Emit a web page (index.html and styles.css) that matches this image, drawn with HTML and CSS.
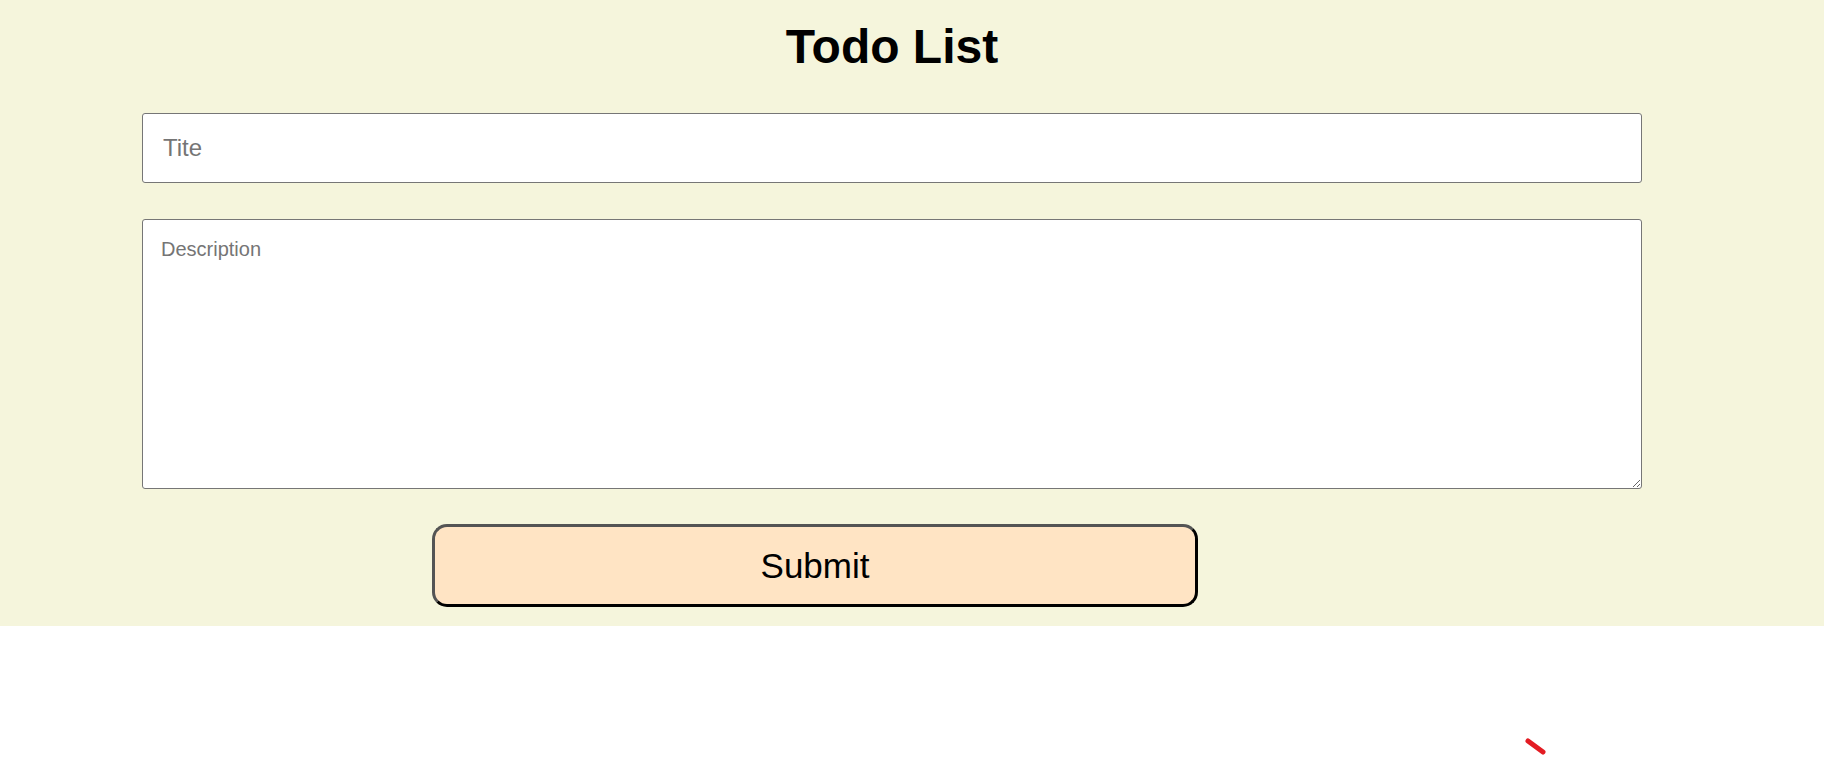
FILE: index.html
```html
<!DOCTYPE html>
<html lang="en">
<head>
<meta charset="utf-8">
<title>Todo List</title>
<link rel="stylesheet" href="styles.css">
</head>
<body>
  <div class="app">
    <form class="todo-form">
      <h1 class="title">Todo List</h1>
      <input class="title-input" type="text" placeholder="Tite">
      <textarea class="desc-input" placeholder="Description"></textarea>
      <button class="submit-btn" type="button">Submit</button>
    </form>
  </div>
  <svg class="stray-mark" width="26" height="22" viewBox="0 0 26 22">
    <line x1="5" y1="5" x2="20" y2="16" stroke="#e31c23" stroke-width="5" stroke-linecap="round"/>
  </svg>
</body>
</html>
```

FILE: styles.css
```css
html, body {
  margin: 0;
  padding: 0;
  background: #ffffff;
  font-family: "Liberation Sans", Arial, sans-serif;
}

.app {
  background: #f5f5dc;
  padding: 19px 0 19px;
}

.todo-form {
  display: flex;
  flex-direction: column;
  align-items: flex-start;
  width: 1500px;
  margin-left: 142px;
}

.title {
  align-self: stretch;
  margin: 0 0 39px;
  font-size: 48px;
  font-weight: bold;
  text-align: center;
  color: #000;
  line-height: normal;
}

.title-input,
.desc-input {
  box-sizing: border-box;
  width: 100%;
  border: 1px solid #767676;
  border-radius: 3px;
  background: #fff;
  font-family: "Liberation Sans", Arial, sans-serif;
  color: #000;
  margin: 0;
}

.title-input {
  height: 70px;
  padding: 0 20px;
  font-size: 24px;
}

.desc-input {
  height: 270px;
  margin-top: 36px;
  padding: 18px 18px;
  font-size: 20px;
  resize: both;
}

.title-input::placeholder,
.desc-input::placeholder {
  color: #757575;
}

.submit-btn {
  box-sizing: border-box;
  width: 766px;
  height: 83px;
  margin: 35px 0 0 290px;
  background: #ffe4c4;
  border: 3px outset #000;
  border-radius: 15px;
  font-family: "Liberation Sans", Arial, sans-serif;
  font-size: 35px;
  color: #000;
  cursor: pointer;
}

.stray-mark {
  position: absolute;
  left: 1523px;
  top: 736px;
}
```
